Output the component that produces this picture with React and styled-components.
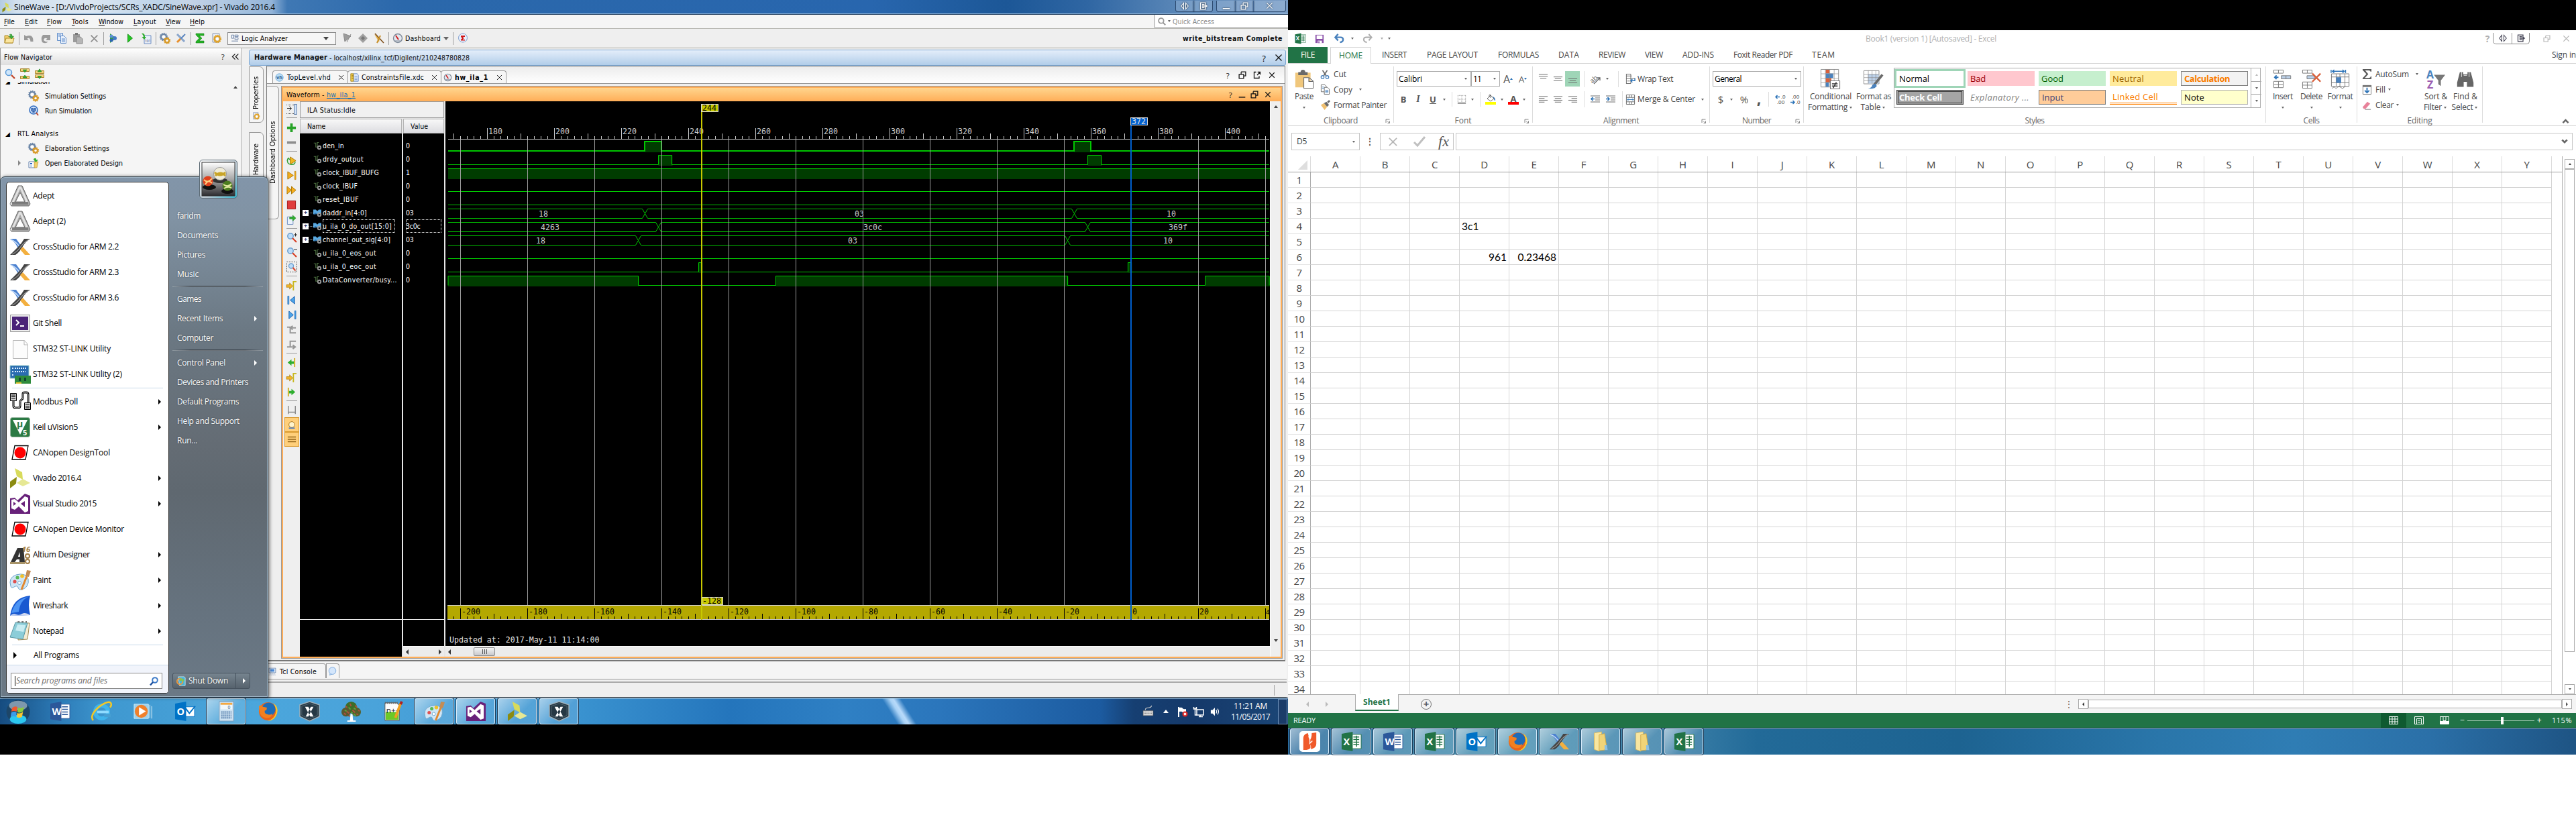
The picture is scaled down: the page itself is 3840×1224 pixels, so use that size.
import React, { useLayoutEffect, useRef, useState } from 'react';
import styled, { createGlobalStyle, css } from 'styled-components';

const UI = '"Open Sans","Noto Sans",sans-serif';
const TAHOMA = '"DejaVu Sans Condensed","Open Sans","DejaVu Sans",sans-serif';
const MONO = '"DejaVu Sans Mono","Liberation Mono",monospace';

const Global = createGlobalStyle`
  *{box-sizing:border-box}
  html,body{margin:0;padding:0;background:#fff;overflow:hidden}
  svg{display:block;flex:none;overflow:visible}
`;

/* ---------- text ---------- */
const TextSpan = styled.span`
  font-family: ${p => (p.$tahoma ? TAHOMA : UI)};
  font-size: ${p => p.$size || (p.$tahoma ? 10.5 : 12)}px;
  font-weight: ${p => (p.$bold ? 700 : 400)};
  font-style: ${p => (p.$italic ? 'italic' : 'normal')};
  color: ${p => p.$color || 'inherit'};
  line-height: 16px;
  letter-spacing: ${p => (p.$tahoma ? '-0.25px' : '-0.3px')};
  white-space: pre;
  flex: none;
  ${p => p.$link && css`text-decoration: underline;`}
`;

/* Text whose tracking is adjusted so that it fills the width given. */
function T({ w, children, size, bold, italic, color, tahoma, link }) {
  const ref = useRef(null);
  const [spacing, setSpacing] = useState(null);
  useLayoutEffect(() => {
    if (!w) return;
    const el = ref.current;
    el.style.letterSpacing = '0px';
    const n = el.textContent.length;
    setSpacing((w - el.getBoundingClientRect().width) / n);
  }, [w, children]);
  return (
    <TextSpan ref={ref} $size={size} $bold={bold} $italic={italic} $color={color} $tahoma={tahoma} $link={link}
      style={spacing === null ? undefined : { letterSpacing: `${spacing}px` }}>
      {children}
    </TextSpan>
  );
}

/* ---------- shared pieces ---------- */
const Row = styled.div`
  display: flex;
  align-items: ${p => p.$align || 'center'};
  flex: none;
  height: ${p => (p.$h ? p.$h + 'px' : 'auto')};
  width: ${p => (p.$w ? p.$w + 'px' : 'auto')};
  padding-left: ${p => p.$pl || 0}px;
  padding-top: ${p => p.$pt || 0}px;
  justify-content: ${p => p.$justify || 'flex-start'};
`;
const Col = styled.div`
  display: flex;
  flex-direction: column;
  flex: none;
  align-items: ${p => p.$align || 'stretch'};
  width: ${p => (p.$w ? p.$w + 'px' : 'auto')};
  height: ${p => (p.$h ? p.$h + 'px' : 'auto')};
  padding-left: ${p => p.$pl || 0}px;
  padding-top: ${p => p.$pt || 0}px;
`;
const Slot = styled.div`
  width: ${p => p.$w}px;
  height: ${p => (p.$h ? p.$h + 'px' : 'auto')};
  flex: none;
  display: flex;
  align-items: center;
  justify-content: ${p => (p.$left ? 'flex-start' : 'center')};
`;
const Rule = styled.div`
  width: 1px;
  height: ${p => p.$h || 19}px;
  background: ${p => p.$color || '#a0a0a0'};
`;
const Down = styled.i`
  border: ${p => p.$s || 3}px solid transparent;
  border-top: ${p => (p.$s || 3) + 1}px solid ${p => p.$color || '#666'};
  border-bottom: 0;
`;
const Right = styled.i`
  border: ${p => p.$s || 4}px solid transparent;
  border-left: ${p => p.$s || 4}px solid ${p => p.$color || '#000'};
  border-right: 0;
`;
const Left = styled.i`
  border: ${p => p.$s || 4}px solid transparent;
  border-right: ${p => p.$s || 4}px solid ${p => p.$color || '#333'};
  border-left: 0;
`;
const Up = styled.i`
  border: ${p => p.$s || 3}px solid transparent;
  border-bottom: ${p => (p.$s || 3) + 1}px solid ${p => p.$color || '#444'};
  border-top: 0;
`;

/* ---------- icons on a 16 unit grid ---------- */
const gear = (x, y, r, c) => (
  <g>
    <circle cx={x} cy={y} r={r} fill="none" stroke={c} strokeWidth="2.4" />
    <circle cx={x} cy={y} r={r + 1.4} fill="none" stroke={c} strokeWidth="1.6" strokeDasharray="1.6 1.5" />
    <circle cx={x} cy={y} r={r - 1.8} fill="#fff" />
  </g>
);
const small = {
  open: <g><path d="M1 4h5l1 2h6v9H1z" fill="#f0cf6c" stroke="#b08c28" /><path d="M3 8h12l-2 7H1z" fill="#fbe6a0" stroke="#b08c28" /><path d="M8 3q4-3 4 2h2.500L11 9 7.500 5H10q0-2-2-2z" fill="#3cb03c" stroke="#1c7c1c" strokeWidth=".5" /></g>,
  undo: <path d="M1 3v8h7L5.500 8.500q4-3 5 4.500h4Q15 1 4 5z" fill="#9a9a9a" />,
  redo: <path d="M15 3v8H8l2.500-2.500Q6 6 5 11q3 3 7 2-4 4-9 1-3-6 1-11z" fill="#9a9a9a" />,
  copy: <g fill="#e8f0fc" stroke="#5f8cc8"><path d="M1.500.5h8v11h-8z" /><path d="M6.500 4.500h5l3 3v8h-8z" /><path d="M8 9h5M8 11h5M8 13h5M3 3h4M3 5h3" /></g>,
  paste: <g fill="#9b9b9b"><path d="M1 2h10v12H1z" /><path d="M4 0h4v3H4z" fill="#777" /><path d="M6 6h6l3 3v7H6z" fill="#b6b6b6" stroke="#888" /></g>,
  cross: <path d="M2 2l12 12M14 2L2 14" stroke="#8e8e8e" strokeWidth="2" />,
  debug: <g><path d="M3 1l9 7-9 7z" fill="#2fa52f" /><circle cx="5" cy="5" r="2.500" fill="#5d8fd8" /><circle cx="10" cy="8" r="3" fill="#4479c8" /><circle cx="5" cy="11" r="2.500" fill="#2e64b4" /></g>,
  run: <path d="M4 1l8 7-8 7z" fill="#24c424" stroke="#138a13" />,
  bits: <g><path d="M5 4h10v12H5z" fill="#e9effa" stroke="#6c8cc0" /><text x="6" y="14" fontSize="5" fontFamily={UI} fill="#335">101</text><path d="M1 1q5-1 5 5h2L5 10 1.500 6H4Q4 3 1 1z" fill="#2fae2f" /></g>,
  gears: <g>{gear(6, 6, 4, '#6d87a8')}{gear(11, 11.500, 3, '#d89a28')}</g>,
  tools: <g><path d="M2 2l11 11" stroke="#8aa6cc" strokeWidth="3" /><path d="M14 2L7 9" stroke="#5d86bf" strokeWidth="2" /><path d="M7 9l-5 5" stroke="#e8902c" strokeWidth="3" /></g>,
  sigma: <path d="M2 1h12v3H7l4 4-4 4h7v3H2v-2l5-5-5-5z" fill="#23b223" stroke="#178017" strokeWidth=".6" />,
  gearPage: <g><path d="M2 1h10v13H2z" fill="#e8edf6" stroke="#8896b0" />{gear(9, 9, 4, '#e0a228')}</g>,
  panes: <g fill="#f4f7fc" stroke="#4f6a94"><path d="M1.500 1.500h4v6h-4zM7.500 1.500h6v3h-6zM7.500 6.500h6v3h-6zM1.500 12.500h12" /></g>,
  wand: <g><path d="M3 1l11 4-9 8zM8 14l6-12" fill="#9c9c9c" stroke="#8a8a8a" /></g>,
  chip: <g fill="#a0a0a0"><path d="M8 1l7 7-7 7-7-7z" /><path d="M8 5l3 3-3 3-3-3z" fill="#777" /></g>,
  noTrig: <g><path d="M1 2l7 12 1-6z" fill="#e2b24e" /><path d="M15 15L2 1" stroke="#7b4a14" strokeWidth="1.500" /><path d="M10 4L5 15" stroke="#c8902c" strokeWidth="2" /></g>,
  gauge: <g><circle cx="8" cy="8" r="6.500" fill="#e3e8ef" stroke="#7c8796" strokeWidth="1.400" /><path d="M9 10L5 4" stroke="#d02020" strokeWidth="2" /><path d="M4 12h8" stroke="#7c8796" /></g>,
  sigRed: <g><circle cx="8" cy="7.500" r="6.500" fill="#e9f0fc" stroke="#7f9fd0" /><path d="M5 4h6v2H8l1.500 1.800L8 10h3v1.500H5V10l2-2-2-2z" fill="#d01818" /></g>,
  lens: <g><circle cx="6" cy="6" r="4.500" fill="#cfe6fa" stroke="#5a9ad8" strokeWidth="1.500" /><path d="M10 10l5 5" stroke="#c04a30" strokeWidth="2.400" /></g>,
  lensGray: <g><circle cx="6.500" cy="6.500" r="5" fill="none" stroke="#999" strokeWidth="2.400" /><path d="M10 10l5 5" stroke="#999" strokeWidth="2.600" /></g>,
  lensPlus: <g><circle cx="6" cy="6" r="4.200" fill="#bcdcf8" stroke="#6a9ed0" strokeWidth="1.500" /><path d="M9 9l6 6" stroke="#d8452c" strokeWidth="2.200" /><path d="M13.500 1.500v5M11 4h5" stroke="#333" /></g>,
  lensMinus: <g><circle cx="6" cy="6" r="4.200" fill="#bcdcf8" stroke="#6a9ed0" strokeWidth="1.500" /><path d="M9 9l6 6" stroke="#d8452c" strokeWidth="2.200" /><path d="M11 4h5" stroke="#333" /></g>,
  lensFit: <g><path d="M.5.5h15v15H.5z" fill="none" stroke="#555" strokeDasharray="2 1.500" /><circle cx="7" cy="6.500" r="3.500" fill="#bcdcf8" stroke="#6a9ed0" strokeWidth="1.300" /><path d="M9.500 9l4 4.500" stroke="#d8452c" strokeWidth="2" /></g>,
  collapse: <g stroke="#a8842c" fill="#f3d27c"><path d="M1.500.5h13v4h-13zM1.500 11.500h13v4h-13z" /><path d="M5 2h6L8 6zM5 14h6l-3-4z" fill="#35b035" stroke="#1c7c1c" strokeWidth=".6" /></g>,
  expand: <g stroke="#a8842c" fill="#f3d27c"><path d="M1.500 3.500h13v4h-13zM1.500 9.500h13v4h-13z" /><path d="M5 5h6L8 .8zM5 11.500h6l-3 4z" fill="#35b035" stroke="#1c7c1c" strokeWidth=".6" /></g>,
  runSim: <g><circle cx="8" cy="7" r="6" fill="#cfe0f8" stroke="#2f6cc0" strokeWidth="1.500" /><path d="M5 9V5h2v5h2V5h2v4" fill="none" stroke="#1d50a0" strokeWidth="1.300" /><path d="M12 11l3 4" stroke="#c04a30" strokeWidth="2" /></g>,
  elab: <g><path d="M1 6h10v9H1z" fill="#fff" stroke="#5e7ca8" /><path d="M3 8h3v2H3zM3 12h3v1H3z" fill="#2868c8" /><path d="M9 6h6l-2 9H9z" fill="#f2cf6a" stroke="#b08c28" strokeWidth=".6" /><path d="M8 2q4-3 4 1h3l-3.500 4L8 3z" fill="#2fae2f" /></g>,
  vhd: <g><circle cx="8" cy="8" r="7" fill="#b8dcf5" stroke="#6aa8d8" /><text x="2.500" y="11.500" fontSize="9" fontWeight="700" fontFamily={UI} fill="#26588c">vh</text></g>,
  xdc: <g><path d="M6 1h7l2 3v11H6z" fill="#dfe9fa" stroke="#5c84c4" /><path d="M8 6h5M8 9h5M8 12h5" stroke="#5c84c4" /><path d="M1 1h5v14H1z" fill="#f0cc4c" stroke="#a08018" /><path d="M3 4h3M3 7h3M3 10h3" stroke="#806000" /></g>,
  dock: <g><path d="M0 1.500h15M0 14.500h15" stroke="#444" strokeDasharray="1 1" /><path d="M11.500.5h4v15h-4z" fill="#d4e4f8" stroke="#5e7ca8" /><path d="M1 6.500h6M4.500 3.500l3 3-3 3" fill="none" stroke="#222" /></g>,
  plus: <path d="M6 1h4v5h5v4h-5v5H6v-5H1V6h5z" fill="#27a327" />,
  minus: <path d="M1 6h14v4H1z" fill="#8d8d8d" />,
  rerun: <g><path d="M6 2l9 6-9 6z" fill="#f2b61e" stroke="#a87808" /><path d="M2 5q-2 8 5 9 6 1 7-4M1 8l2-4 3 3" fill="none" stroke="#35a035" strokeWidth="1.600" /></g>,
  step: <g><path d="M2 2l9 6-9 6z" fill="#f6ad1c" stroke="#a87808" /><path d="M13 1.500h2v13h-2z" fill="#f6ad1c" stroke="#a87808" strokeWidth=".6" /></g>,
  fast: <path d="M1 2l7 6-7 6zM8 2l7 6-7 6z" fill="#f6ad1c" stroke="#a87808" />,
  stop: <path d="M1.500 1.500h13v13h-13z" fill="#e03c3c" stroke="#a01818" />,
  exportI: <g><path d="M1.500 3.500h9v12h-9z" fill="#eaf2fc" stroke="#6c8cc0" /><path d="M5 4h5V1l5 4.500L10 10V7H5z" fill="#2fae2f" stroke="#1c7c1c" strokeWidth=".6" /></g>,
  edge: <g><path d="M0 7h5V4l5 5-5 5v-3H0z" fill="#f0b42a" stroke="#a87808" strokeWidth=".7" /><path d="M11 16V2h5" fill="none" stroke="#c8b820" strokeWidth="2" /></g>,
  prev: <g><path d="M13 2v12L6 8z" fill="#4ba3e8" stroke="#1d62b0" /><path d="M2 1.500h2v13H2z" fill="#4ba3e8" stroke="#1d62b0" strokeWidth=".7" /></g>,
  next: <g><path d="M4 2v12l7-6z" fill="#4ba3e8" stroke="#1d62b0" /><path d="M13 1.500h2v13h-2z" fill="#4ba3e8" stroke="#1d62b0" strokeWidth=".7" /></g>,
  swapL: <path d="M1 4h5v9h9M7 5h8M10 2L6 5l4 3" fill="none" stroke="#989898" strokeWidth="2.200" />,
  swapR: <path d="M1 12h5V3h9M3 12h10M10 9l4 3-4 3" fill="none" stroke="#989898" strokeWidth="2.200" />,
  mark: <g><path d="M2 8l6-5v3h4v4H8v3z" fill="#2fae2f" /><path d="M13 1v14" stroke="#d0b020" strokeWidth="2" /></g>,
  markR: <g><path d="M14 8L8 3v3H4v4h4v3z" fill="#2fae2f" /><path d="M3 1v14" stroke="#d0b020" strokeWidth="2" /></g>,
  snap: <path d="M2 1v14M14 1v14M2 12h12" stroke="#888" strokeWidth="1.600" fill="none" />,
  hand: <g><circle cx="8" cy="8" r="5" fill="#fff4cc" stroke="#a06a10" /><path d="M3 14h10" stroke="#4a78c0" strokeWidth="2" /></g>,
  lines: <path d="M1 4h14M1 8h14M1 12h14" stroke="#94661a" strokeWidth="1.500" />,
  pc: <g><path d="M1.500 1.500h13v9h-13z" fill="#e4edf8" stroke="#5e7ca8" /><path d="M4 3.500h8v5H4z" fill="#4d8bd8" /><path d="M2 13h12M1 15h14" stroke="#5e7ca8" strokeDasharray="1 1" /></g>,
  bubble: <g><circle cx="8" cy="7.500" r="6.500" fill="#d4e6fb" stroke="#6a9ed8" /><path d="M4 12l-1 3.500 4-2" fill="#d4e6fb" stroke="#6a9ed8" /></g>,
  wave: <g fill="none"><path d="M1 3h4v8h3V2h3" stroke="#4c7040" strokeWidth="1.500" /><circle cx="12" cy="12" r="3" stroke="#9a9a9a" strokeWidth="2.500" /></g>,
  bus: <g><path d="M0 2h5l3 3 3-3h5v9H0z" fill="#5aa9e0" /><path d="M0 12l4-4 4 2" fill="#2c72ac" /><circle cx="12" cy="12" r="3" fill="none" stroke="#9a9a9a" strokeWidth="2.500" /></g>,
  restore: <path d="M5.500 1.500h9v8h-4M1.500 6.500h9v8h-9zM5.500 6V2" fill="none" stroke="currentColor" strokeWidth="1.700" />,
  floatW: <path d="M6 2H2v12h10v-4M9 2h5v5M14 2L8 8" fill="none" stroke="currentColor" strokeWidth="1.700" />,
  close: <path d="M2 2l12 12M14 2L2 14" stroke="currentColor" strokeWidth="1.700" />,
  qm: <text x="4.500" y="13.500" fontSize="14" fontFamily={UI} fill="currentColor">?</text>,
  line: <path d="M1 13h14" stroke="currentColor" strokeWidth="2" />,
  chevL: <path d="M8 3L3 8l5 5M14 3L9 8l5 5" fill="none" stroke="currentColor" strokeWidth="1.500" />,
  scissors: <g><path d="M4 1l6 9M12 1L6 10" stroke="#666" strokeWidth="2" /><g fill="none" stroke="#4a82bd" strokeWidth="1.500"><circle cx="4" cy="12.500" r="2.500" /><circle cx="12" cy="12.500" r="2.500" /></g></g>,
  xcopy: <g fill="#fff" stroke="#6a6a6a"><path d="M1.500.5h6l2 2v9h-8z" /><path d="M6.500 4.500h5l3 3v8h-8z" /><path d="M8 9h5M8 11h5M8 13h5M3 4h3M3 6h3" stroke="#4a82bd" /></g>,
  painter: <g><path d="M1 8l5-3 5 6-4 5z" fill="#f0c070" /><path d="M6 5l4-2 4 5-3 3z" fill="#6a6a6a" /><path d="M12 4l3-3" stroke="#6a6a6a" strokeWidth="3" /></g>,
  floppy: <g><path d="M1 1h14v14H1z" fill="#8a4fa8" /><path d="M3 2h10v6H3z" fill="#fff" /><path d="M5 11h7v4H5z" fill="#fff" /><path d="M6 12h2v3H6z" fill="#8a4fa8" /></g>,
  xundo: <path d="M2 6h8q4 0 4 3.500T9 14M6 1L1.500 6 6 11" fill="none" stroke="#4a82bd" strokeWidth="2.600" />,
  xredo: <path d="M14 6H6Q2 6 2 9.500T7 14M10 1l4.500 5L10 11" fill="none" stroke="#b0b0b0" strokeWidth="2.200" />,
  xlT: <path d="M1 1h14M1 4h14M3 7h10" stroke="#6a6a6a" fill="none" />,
  xlM: <path d="M1 5h14M3 8h10M1 11h14" stroke="#6a6a6a" fill="none" />,
  xlB: <path d="M1 8h14M3 11h10M1 14h14" stroke="#6a6a6a" fill="none" />,
  xlL: <path d="M1 3h14M1 6h9M1 9h14M1 12h9" stroke="#6a6a6a" fill="none" />,
  xlC: <path d="M1 3h14M3 6h10M1 9h14M3 12h10" stroke="#6a6a6a" fill="none" />,
  xlR: <path d="M1 3h14M6 6h9M1 9h14M6 12h9" stroke="#6a6a6a" fill="none" />,
  indL: <g fill="none" stroke="#6a6a6a"><path d="M1 3h14M8 6h7M8 9h7M1 12h14" /><path d="M7 7.500H2M4.500 5L2 7.500 4.500 10" stroke="#2e74b8" strokeWidth="1.600" /></g>,
  indR: <g fill="none" stroke="#6a6a6a"><path d="M1 3h14M8 6h7M8 9h7M1 12h14" /><path d="M1 7.500h5M3.500 5L6 7.500 3.500 10" stroke="#2e74b8" strokeWidth="1.600" /></g>,
  orient: <g><text x="0" y="12" fontSize="10" fontFamily={UI} fill="#555" transform="rotate(-42 5 10)">ab</text><path d="M5 15L14 6M10 6h4v4" stroke="#666" fill="none" strokeWidth="1.300" /></g>,
  wrap: <g fill="none" stroke="#6a6a6a"><path d="M1.500 0v16M1 3.500h9M1 7.500h14M1.500.5h7v15h-7M3 11.500h4" /><path d="M15 7v4H9M11 8.500L8.500 11l2.500 2.500" stroke="#2e74b8" strokeWidth="1.500" /></g>,
  merge: <g fill="none" stroke="#6a6a6a"><path d="M1.500.5h13v15h-13zM1.500 4.500h13M1.500 11.500h13M6 .5v4M10 .5v4M6 11.500v4M10 11.500v4" /><path d="M3 8h10M5 6L3 8l2 2M11 6l2 2-2 2" stroke="#2e74b8" /></g>,
  borderLine: <g><path d="M1.500 1.500h13M1.500 1.500v12M14.500 1.500v12M8 1.500v12M1.500 8h13" fill="none" stroke="#888" strokeDasharray="1 1" /><path d="M1 14.500h14" stroke="#444" strokeWidth="1.600" /></g>,
  bucket: <g><path d="M3 7l5-5 5 5-5 4z" fill="#fff" stroke="#6a6a6a" /><path d="M6 5V1.500h2V6" fill="none" stroke="#6a6a6a" /><path d="M11 4q4 1 4 6-2 0-2-3z" fill="#2e74b8" /><path d="M0 12h16v4H0z" fill="#ff0" /></g>,
  fontCol: <g><text x="3.500" y="11.500" fontSize="13" fontWeight="700" fontFamily={UI} fill="#555">A</text><path d="M0 12h16v4H0z" fill="#f00" /></g>,
  launcher: <g fill="none" stroke="#777" strokeWidth="1.800"><path d="M2 12V2h11M6 7l6 6M13 7v6H7" /></g>,
  fill: <g><path d="M1.500 1.500h13v14h-13z" fill="#fff" stroke="#777" /><path d="M1 1h14v3H1z" fill="#777" /><path d="M8 5v8M4.500 9.500L8 13l3.500-3.500" stroke="#2e74b8" fill="none" strokeWidth="2" /></g>,
  eraser: <g><path d="M1 11l8-9 5 3-8 9H3z" fill="#e8829a" /><path d="M5 15h10" stroke="#666" /></g>,
  xsum: <path d="M1 0h14v4h-1.500Q13 2 11 2H5l5 6-5.500 6H11q2.500 0 3-2.500h1V16H1v-1.500L7 8 1 1.500z" fill="#5a5a5a" />,
  caretUp: <path d="M3 10l5-5 5 5" fill="none" stroke="#666" strokeWidth="3" />,
  caretDn: <path d="M2 4l6 6 6-6" fill="none" stroke="#666" strokeWidth="4" />,
  arrowsOut: <g fill="none" stroke="currentColor" strokeWidth="1.400"><path d="M6 2v12L1 8zM10 2v12l5-6z" /></g>,
  exit: <g fill="none" stroke="currentColor" strokeWidth="1.700"><path d="M12 5V1.500H2v13h10V11M5 5h5M5 8h9M5 11h5M11 5l4 3-4 3" /></g>,
  keyboard: <g><path d="M1 7h14v7H1z" fill="#ddd" stroke="#555" strokeWidth=".6" /><path d="M2 9h12M2 11h12" stroke="#555" strokeDasharray="1 1" /><path d="M4 6q0-3 4-3t5-3" stroke="#ccc" fill="none" /></g>,
  flag: <g><path d="M2 1v15" stroke="#fff" strokeWidth="2" /><path d="M3 2q4-1 5 1t5 1v6q-4 1-5-1t-5-1z" fill="#fff" /><circle cx="11.500" cy="11.500" r="4" fill="#d82424" /><path d="M10 10l3 3M13 10l-3 3" stroke="#fff" strokeWidth="1.400" /></g>,
  net: <g fill="none" stroke="#fff" strokeWidth="1.500"><path d="M5 5h10v8H5zM8 15.500h6M10 13v2" /><path d="M2.500 2v5M.5 1v3h4V1M2.500 7v6H5" /></g>,
  vol: <g><path d="M1 5h3l4-4v14l-4-4H1z" fill="#fff" /><path d="M10 5q2 3 0 6M12.500 3q3.500 5 0 10" stroke="#fff" fill="none" strokeWidth="1.300" /></g>,
};
function Icon({ n, s = 16 }) {
  return <svg width={s} height={s} viewBox="0 0 16 16">{small[n]}</svg>;
}

/* ---------- icons on a 32 unit grid ---------- */
const officeTile = (c, letter, sheet) => (
  <g>
    <path d="M15 5h16v22H15z" fill="#fff" stroke={c} />
    {sheet}
    <path d="M1 4l17-3v30L1 28z" fill={c} />
    <text x="3.500" y="21.500" fontSize="15" fontWeight="700" fontFamily={UI} fill="#fff">{letter}</text>
  </g>
);
const big = {
  penrose: (
    <g strokeLinejoin="round">
      <path d="M13 1h6l12 27-2 3H3l-2-3z" fill="#a9a9a9" stroke="#666" />
      <path d="M16 2L5 26l-3 3M16 2l10 22-2 1" fill="none" stroke="#e2e2e2" strokeWidth="3" />
      <path d="M4 27h24" stroke="#7e7e7e" strokeWidth="4" />
      <path d="M16 11l7 14H9z" fill="#fff" stroke="#666" />
    </g>
  ),
  crossX: (
    <g>
      <path d="M1 4h9l8 11-5 3Q8 8 1 4z" fill="#4d82d0" />
      <path d="M2 5q8 3 14 12" fill="none" stroke="#c4dcf8" strokeWidth="1.500" />
      <path d="M31 4h-9q-4 7-8 11L1 28h8q6-4 10-11Q24 8 31 4z" fill="#444" />
      <path d="M29 5q-8 5-13 12-5 7-12 10" fill="none" stroke="#999" strokeWidth="1.200" />
      <path d="M20 16l11 12h-8l-7-8z" fill="#f3b040" />
    </g>
  ),
  shell: <g><path d="M1.500 3.500h29v25h-29z" fill="#eee" stroke="#999" /><path d="M4 6h24v20H4z" fill="#4a2378" /><path d="M10 11l4 4-4 4M16 20h6" stroke="#fff" strokeWidth="2" fill="none" /></g>,
  page: <path d="M5.500 3.500h17l5 6v21h-22zM22 4v6h5" fill="#fcfcfc" stroke="#b5b5b5" />,
  stlink: <g><path d="M1 3h28v19H1z" fill="#2a6cb0" stroke="#9cc" /><path d="M4 7h2M8 7h18M4 12h2M8 12h16M4 17h2" stroke="#d8ecff" strokeWidth="2" strokeDasharray="2 1" /><path d="M8 18h24v12H8z" fill="#2e8b3c" /><path d="M14 21h3v5h-3zM22 21h3v5h-3z" fill="#143" /><path d="M10 29h8" stroke="#e0c030" strokeWidth="2" /></g>,
  modbus: <g fill="none" stroke="#000"><path d="M1.500 3.500h9v11h-9z" fill="#ccc" /><path d="M3 6h6M3 8.500h6M3 11h6" /><path d="M22.500 17.500h9v10h-9z" fill="#ccc" /><path d="M24 20h6M24 22.500h6M24 25h6" /><path d="M6 15v7q0 3 3 3h4q3 0 3-3v-6q0-2 2-3t2-3V4q0-2 3-2h2q3 0 3 3v12" strokeWidth="3" /><path d="M6 15v7q0 3 3 3h4q3 0 3-3v-6q0-2 2-3t2-3V4q0-2 3-2h2q3 0 3 3v12" stroke="#ccc" /></g>,
  keil: <g><rect x="1.500" y="1.500" width="29" height="29" rx="3" fill="#2b7a44" stroke="#9cb8a4" /><path d="M5 5h22l-11 22z" fill="#fff" /><text x="11" y="16" fontSize="14" fontWeight="700" fontFamily={UI} fill="#2b7a44">μ</text><text x="20" y="28" fontSize="11" fontWeight="700" fontFamily={UI} fill="#fff">5</text></g>,
  canopen: <g><path d="M8 5.500h20L24 26H4z" fill="#fff" stroke="#000" strokeWidth="1.300" /><circle cx="16" cy="16" r="8.500" fill="#f00" /></g>,
  vivado: <g><path d="M8 1l11 6 1 11-9-5z" fill="#d8db5c" /><path d="M11 14L1 21v10l9-7z" fill="#8b8b10" /><path d="M11 23l9-6 11 6-11 5z" fill="#e6e894" /></g>,
  vs: <g><path d="M1 31V8l7-1 4 4L23 1l8 3v27z" fill="#68217a" /><path d="M3 10l5-1 6 5 9-9 5 2v20l-5 2-9-9-6 5-5-2z" fill="#fff" /><path d="M6 13v6l4-3zM23 12l-6 4 6 5z" fill="#68217a" /></g>,
  altium: <g><path d="M1 27h22v3H1z" fill="#a89468" /><path d="M12 6h9l2 21h-8v-4h-4l-3 4H2zM15 12l-2 7h3z" fill="#333" fillRule="evenodd" /><text x="19" y="12" fontSize="11" fontWeight="700" fontStyle="italic" fontFamily={UI} fill="#a07c44">16</text><g fill="none" stroke="#a07c44" strokeWidth="2"><circle cx="27" cy="18" r="3" /><circle cx="27" cy="26" r="3" /></g></g>,
  paint: <g><path d="M2 25Q-2 12 10 8q14-4 18 6 2 12-9 16-5 1-6-3t-6-1q-4 3-5-1z" fill="#cfe6f6" stroke="#6fa6cc" /><circle cx="8" cy="18" r="2.600" fill="#e05050" /><circle cx="12" cy="12" r="2.600" fill="#58b858" /><circle cx="19" cy="10" r="2.800" fill="#f2c028" /><circle cx="15" cy="20" r="2.500" fill="#fff" stroke="#6fa6cc" /><path d="M18 30l8-20" stroke="#e08830" strokeWidth="3" /><path d="M24 10l2-9 6 1-3 9z" fill="#c48c54" /></g>,
  shark: <g><path d="M1 31Q5 3 31 1q-4 13 0 29z" fill="#1858d0" /><path d="M3 27Q9 6 28 3q-12 5-14 22z" fill="#4c94f4" /><path d="M1 31q4-4 9-2t9-1 12 2z" fill="#cfd8f0" /></g>,
  notepad: <g><path d="M12 3l18 1-3 24-14 1z" fill="#f4ecd4" stroke="#a08850" /><path d="M9 3l18 1-7 24L1 25z" fill="#8ccdd8" stroke="#5c98a4" /><path d="M12 6l12 1-3 10-12-2z" fill="#c8ecf2" /><path d="M11 2h16" stroke="#777" strokeWidth="2" strokeDasharray="1 1" /></g>,
  word: officeTile('#2b579a', 'W', <path d="M19 9h9M19 13h9M19 17h9M19 21h9" stroke="#2b579a" strokeWidth="1.500" />),
  excel: officeTile('#217346', 'X', <g stroke="#217346" strokeWidth="1.500"><path d="M19 9h9M19 13h9M19 17h9M19 21h9M24 7v17" /></g>),
  outlook: <g><path d="M16 9h15v15H16z" fill="#fff" stroke="#0072c6" /><path d="M17 11l6 8 9-11" fill="none" stroke="#0072c6" strokeWidth="2" /><path d="M1 4l17-3v30L1 28z" fill="#0072c6" /><text x="3.500" y="21.500" fontSize="15" fontWeight="700" fontFamily={UI} fill="#fff">O</text></g>,
  ie: <g fill="none"><circle cx="16" cy="17" r="10" stroke="#3fb4ec" strokeWidth="6" /><path d="M9 17h18" stroke="#8fdcff" strokeWidth="4" /><path d="M20 22.500h10" stroke="#479fd2" strokeWidth="5" /><path d="M3 30Q-3 22 12 9 26-1 30 3q2 3-1 7" stroke="#f4c826" strokeWidth="2.600" /></g>,
  wmp: <g><path d="M2 5h22v22H2z" fill="#9cd0ec" stroke="#c8e8f8" /><path d="M26 6v20M29 8v19" stroke="#8cc4e4" strokeWidth="2" /><circle cx="13" cy="16" r="10" fill="#f0802c" /><path d="M9.500 9.500v13L20 16z" fill="#fff" /></g>,
  shut: <g><path d="M8 2h18l4 3v25H12z" fill="#49b4d4" stroke="#bfe8f4" strokeWidth="2" /><circle cx="13" cy="17" r="9" fill="none" stroke="#f09a3c" strokeWidth="4" /><path d="M13 6l6 3v6h-6zM20 8l6 2v6h-6z" fill="#7cc850" /></g>,
  calc: <g><path d="M5 1h22v30H5z" fill="#cde2f2" stroke="#7c9cb8" /><path d="M7 3h18v3H7z" fill="#f6a840" /><path d="M7 6h18v7H7z" fill="#f2f8fc" /><path d="M8 17h16M8 20h16M8 23h16M8 26h16" stroke="#5c84b0" strokeWidth="2" strokeDasharray="2 1" /><text x="18" y="12" fontSize="7" fontFamily={UI} fill="#357">0</text></g>,
  firefox: <g><circle cx="16" cy="16" r="14" fill="#e8641c" /><circle cx="17" cy="13" r="10.500" fill="#1e6cb8" /><path d="M24 3q9 7 6 16-4 12-15 12 11-3 13-13 1-8-4-15z" fill="#fcc828" /><path d="M2 8q4-3 6 1l6 1q1 4-3 5-1 5 5 6 4 1 7-2-2 8-10 7Q4 25 3 16z" fill="#f28020" /></g>,
  shieldX: <g><path d="M16 1l15 5v18l-15 7-15-7V6z" fill="#263844" stroke="#9fb0ba" strokeWidth="1.500" /><path d="M16 4l12 4v14l-12 6-12-6V8z" fill="none" stroke="#52646f" /><path d="M9 9h5l8 15h-5zM22 9h-4l-8 15h4z" fill="#fff" /></g>,
  tree: <g><path d="M15 20h3l1 11h-5z" fill="#fff" /><circle cx="16" cy="10" r="9" fill="#3e6c28" /><circle cx="8" cy="17" r="7" fill="#5a5830" /><circle cx="24" cy="17" r="7" fill="#54602c" /><path d="M7 8l3 2M14 4l2 4M22 7l3 3M9 16l4 3M18 14l4 4M24 20l3 1M12 24l2-2M5 19l3 2M27 14l2 2" stroke="#b0503c" strokeWidth="2" /><path d="M12 10l3 3M20 11l3 2M6 14l3 2M20 20l3 3M16 17l2 2" stroke="#5fa03c" strokeWidth="2" /><path d="M10 31h13" stroke="#fff" strokeWidth="2" /></g>,
  npp: <g><path d="M4 3h18l4 4v23H4z" fill="#fcfcfc" stroke="#555" /><path d="M5 17h20v12H5z" fill="#6cc828" /><path d="M4 3h20" stroke="#666" strokeWidth="3" strokeDasharray="1.500 1.500" /><text x="6" y="19" fontSize="12" fontFamily={UI} fill="#111">n++</text><path d="M20 26L28 4" stroke="#f0a020" strokeWidth="4" /><path d="M28 5l2-4" stroke="#b02020" strokeWidth="4" /></g>,
  foxit: <g><rect x="0" y="0" width="32" height="32" rx="5" fill="#fff" /><path d="M6 29V11q0-5 4-7l3-1q2 8 4 11v12q-3 3-6 3zM26 2v17q0 5-4 7l-4 2q0-6-2-11l-1-2q4-3 4-12z" fill="#f0592a" /><path d="M14 8q3 5 2 11l4-4" fill="none" stroke="#fff" strokeWidth="1.300" /></g>,
  folder: <g><path d="M5 2l12-2v26l-4 6-8-3z" fill="#f8e6a0" stroke="#d8b85c" /><path d="M13 5l9-2 3 20-3 7-9 1z" fill="#f0d478" stroke="#cda848" /><path d="M22 22h4l1 8h-5z" fill="#8ac0e4" /></g>,
  clip: <g><path d="M1 5h26v25H1z" fill="#f0c77c" /><path d="M6 4h4q0-4 4-4t4 4h4v5H6z" fill="#6a6a6a" /><path d="M15.500 13.500h9l7 6v12h-16zM24 14v6h7" fill="#fff" stroke="#6a6a6a" strokeWidth="1.200" /></g>,
  cond: <g><path d="M.5.5h28v28H.5z" fill="#fff" stroke="#888" /><path d="M8 1h6v6H8zM8 14h9v7H8z" fill="#d8603c" /><path d="M8 7h12v7H8zM8 21h5v7H8z" fill="#4a82bd" /><path d="M.5 7.500h28M.5 14.500h28M.5 21.500h28M7.500 0v28M14.500 0v28M21.500 0v28" stroke="#888" fill="none" strokeWidth=".7" /><path d="M15.500 18.500h15v13h-15z" fill="#fff" stroke="#666" /><path d="M18 23.500h9M18 27h9M25 21l-5 9" stroke="#333" strokeWidth="1.500" /></g>,
  table: <g><path d="M.5 2.500h24v21H.5z" fill="#fff" stroke="#888" /><path d="M7 8h17v15H7z" fill="#bcd0e8" /><path d="M.5 8.500h24M.5 13.500h24M.5 18.500h24M7.500 2v21M13.500 2v21M19.500 2v21" stroke="#888" fill="none" strokeWidth=".7" /><path d="M30 9L17 25" stroke="#6a6a6a" strokeWidth="4" /><path d="M7 31q6-1 7-6l5-2 2 4q-3 5-14 4z" fill="#4a82bd" /></g>,
  insert: <g fill="#fff" stroke="#777"><path d="M1.500 1.500h15v5h-15zM9 1.500v5M1.500 19.500h15v10h-15zM9 19.500v10M1.500 24.500h15" /><path d="M13.500 10.500h15v5h-15zM21 10.500v5" fill="#bcd0e8" /><path d="M9 13H3M6 10l-3 3 3 3" fill="none" stroke="#2e74b8" strokeWidth="2" /></g>,
  del: <g fill="#fff" stroke="#777"><path d="M1.500 1.500h15v5h-15zM9 1.500v5M1.500 20.500h15v10h-15zM9 20.500v10M1.500 25.500h15" /><path d="M8.500 10.500h12v5h-12z" fill="#bcd0e8" /><path d="M17 7l13 13M30 7L17 20" stroke="#d8603c" strokeWidth="2.600" /></g>,
  fmt: <g fill="#fff" stroke="#777"><path d="M1.500 7.500h28v20h-28zM1.500 12.500h28M1.500 21.500h28M9 7.500v20M15 7.500v20M23 7.500v20M3 31q2-5 6 0 4-6 10 0l5-4" /><path d="M9 13h8v9H9z" fill="#4a82bd" stroke="none" /><path d="M1 1v5M24 1v5M3 3.500h19M6 1L3 3.500 6 6M19 1l3 2.500L19 6" fill="none" stroke="#2e74b8" strokeWidth="1.500" /></g>,
  sort: <g><text x="1" y="15" fontSize="17" fontWeight="700" fontFamily={UI} fill="#4a82bd">A</text><text x="2" y="31" fontSize="17" fontWeight="700" fontFamily={UI} fill="#9a5cb0">Z</text><path d="M13 9h18l-7 9v9l-4-3v-6z" fill="#777" /></g>,
  bino: <g fill="#666"><path d="M6 3h6v4h8V3h6l5 19v8H19v-9h-6v9H1v-8z" /><path d="M13 9h6M9 2v10M23 2v10" stroke="#fff" /></g>,
  orb: <g><circle cx="16" cy="16" r="15.500" fill="#1d4668" /><ellipse cx="16" cy="26" rx="11" ry="6" fill="#2cc8f0" /><ellipse cx="16" cy="8" rx="12" ry="6.500" fill="#9fb4c4" opacity=".75" /><path d="M8 11q4-3 7-1l-1 6q-4-2-7 0z" fill="#f0582c" /><path d="M16 10.500q4 2 8-1l-1.500 6q-4 3-7.500 1z" fill="#8ccb3c" /><path d="M7 17q4-2 7 0l-1 6q-4-2-7 0z" fill="#3c9ce8" /><path d="M15 17.500q3 2 7.500-1L21 23q-4 2-7 0z" fill="#fcc830" /></g>,
};
function BigIcon({ n, s = 32, h }) {
  return <svg width={s} height={h || s} viewBox="0 0 32 32">{big[n]}</svg>;
}

/* ================= Vivado ================= */
const Page = styled.div`display:flex;width:3840px;height:1224px;background:#fff;font-family:${UI};color:#000;`;
const Monitor = styled.div`width:1920px;flex:none;position:relative;display:flex;flex-direction:column;`;
const Bezel = styled.div`height:45px;background:#000;flex:none;`;

const Window = styled.div`height:1040px;background:#f0f0f0;display:flex;flex-direction:column;flex:none;overflow:hidden;`;
const TitleBar = styled.div`
  height:22px;flex:none;display:flex;align-items:center;justify-content:space-between;
  border-bottom:1px solid #26415f;box-shadow:inset 0 -1px #8fb4d8;
  background:linear-gradient(90deg,#b4cce2 0,#d2e0ee 25px,#dce7f2 130px,#bcd3e8 240px,#c6d4e6 280px,#a9c4e0 350px,#93b4d8 405px,#3f78b4 428px,#2b68ab 600px,#2866ae 1300px,#1c5797 1500px,#2f66a3 1620px,#5583b5 1740px,#7a9cc4 1920px);
`;
const WinButtons = styled.div`display:flex;height:17px;align-self:flex-start;border:1px solid #2c4a70;border-top:0;border-radius:0 0 4px 4px;background:rgba(190,212,236,.28);color:#fff;margin-left:5px;`;
const WinButton = styled.div`width:${p => p.$w}px;display:flex;align-items:center;justify-content:center;border-right:1px solid #3f6390;filter:drop-shadow(0 0 1px #123);&:last-child{border-right:0}`;
const MenuBar = styled.div`height:21px;flex:none;display:flex;align-items:center;background:#f5f5f5;border-bottom:1px solid #b9b9b4;padding-left:6px;`;
const QuickAccess = styled.div`margin-left:auto;width:199px;height:20px;background:#fff;border-left:1px solid #999;border-bottom:1px solid #999;display:flex;align-items:center;padding-left:4px;`;
const Toolbar = styled.div`height:29px;flex:none;display:flex;align-items:center;background:#efefef;border-bottom:1px solid #a8a8a0;padding-left:1px;`;
const Combo = styled.div`width:162px;height:19px;margin:0 4px 0 3px;border:1px solid #888;background:#f6f6f6;display:flex;align-items:center;padding-left:4px;`;
const Body = styled.div`display:flex;flex:1;min-height:0;`;
const FlowNav = styled.div`width:360px;flex:none;border-left:1px solid #999;border-right:1px solid #b0b0b0;background:#f5f5f5;margin-right:11px;`;
const NavHead = styled.div`height:25px;display:flex;align-items:center;padding-left:5px;background:linear-gradient(#fff,#dedede);`;
const NavTools = styled.div`height:25px;display:flex;align-items:center;gap:6px;padding-left:6px;`;
const NavList = styled.div`height:140px;overflow:hidden;display:flex;`;
const NavItem = styled.div`height:22px;display:flex;align-items:center;padding-left:${p => p.$indent}px;margin-top:${p => p.$mt || 0}px;`;
const NavTri = styled.span`font-size:9px;width:18px;`;
const Main = styled.div`flex:1;display:flex;flex-direction:column;padding:2px 3px 0 0;`;
const HwBar = styled.div`height:24px;flex:none;border:1px solid #7ba6d2;border-radius:3px;background:linear-gradient(#e4eefa,#b1cde9);display:flex;align-items:center;padding-left:7px;color:#111;width:1546px;`;
const Work = styled.div`display:flex;height:888px;flex:none;`;
const SideTabs = styled.div`width:26px;padding-top:1px;display:flex;flex-direction:column;gap:14px;`;
const VTab = styled.div`
  width:${p => p.$w}px;height:${p => p.$h}px;border:1px solid #999;border-left:${p => (p.$open ? '0' : '1px solid #999')};border-radius:0 6px 6px 0;background:#f5f5f5;
  display:flex;flex-direction:column;align-items:center;justify-content:flex-end;padding-bottom:${p => p.$pb || 3}px;gap:4px;
`;
const VText = styled.span`writing-mode:vertical-rl;transform:rotate(180deg);font:11px ${TAHOMA};letter-spacing:-.1px;white-space:nowrap;height:${p => p.$h}px;line-height:14px;`;
const Frame = styled.div`width:1519px;border:1px solid #777;border-bottom:2px solid #777;background:#efefef;display:flex;flex-direction:column;`;
const TabStrip = styled.div`height:26px;flex:none;display:flex;align-items:flex-end;padding-left:8px;border-bottom:1px solid #999;background:linear-gradient(#ececec,#fff);`;
const FileTab = styled.div`height:19px;width:${p => p.$w}px;border:1px solid #999;border-bottom:0;border-radius:4px 4px 0 0;background:#f6f6f6;display:flex;align-items:center;padding-left:3px;margin-right:-1px;& > :last-child{margin-left:auto}`;
const TabClose = styled.div`width:19px;display:flex;justify-content:center;color:#000;`;
const Controls = styled.div`display:flex;align-items:center;margin-left:auto;color:#111;`;
const FrameBody = styled.div`display:flex;flex:1;padding-top:3px;`;
const WaveWindow = styled.div`width:1493px;height:854px;border:1px solid #999;padding:2px;background:#ffad57;flex:none;`;
const WaveTitle = styled.div`height:20px;display:flex;align-items:center;padding-left:5px;background:linear-gradient(#ffd58e,#ffae58);`;
const WaveBody = styled.div`display:flex;height:828px;background:#efefef;`;
const ToolCol = styled.div`width:25px;display:flex;flex-direction:column;align-items:center;padding-top:1px;`;
const ToolCell = styled.div`width:22px;height:22px;display:flex;align-items:center;justify-content:center;${p => p.$on && css`background:#ffcf7a;border:1px solid #d99a30;`}`;
const ToolRule = styled.div`width:16px;height:1px;background:#999;margin:${p => p.$m || '2px 0'};`;
const Names = styled.div`width:217px;display:flex;flex-direction:column;background:#e6e6e6;`;
const Status = styled.div`width:215px;height:25px;border:1px solid #999;background:#f0f0f0;display:flex;align-items:center;padding-left:10px;margin-bottom:1px;`;
const Head = styled.div`height:22px;width:${p => p.$w}px;border:1px solid #b5b5b5;background:linear-gradient(#f8f8f8,#dcdce0);display:flex;align-items:center;padding-left:10px;`;
const BlackCol = styled.div`width:${p => p.$w}px;background:#000;display:flex;flex-direction:column;margin-right:2px;color:#fff;`;
const SignalArea = styled.div`height:725px;border-bottom:1px solid #fff;padding-top:8px;`;
const Signal = styled.div`height:20px;display:flex;align-items:center;padding-left:4px;`;
const Expander = styled.div`width:9px;height:9px;background:#fff;color:#236;font:bold 9px/8px ${UI};text-align:center;`;
const Dots = styled.div`width:7px;border-top:1px dotted #999;`;
const Picked = styled.span`height:20px;display:flex;align-items:center;width:${p => p.$w}px;${p => p.$on && css`outline:1px dotted #fff;outline-offset:-1px;`}`;
const HScroll = styled.div`height:16px;flex:none;background:#ececec;display:flex;align-items:center;padding:0 4px;justify-content:space-between;border-top:1px solid #fff;`;
const Thumb = styled.div`width:32px;height:13px;border:1px solid #8c8c8c;border-radius:2px;background:linear-gradient(#f4f4f4,#c8c8cc);display:flex;align-items:center;justify-content:center;gap:2px;margin:0 auto 0 34px;`;
const VScroll = styled.div`width:16px;background:#efefef;display:flex;flex-direction:column;justify-content:space-between;align-items:center;padding:6px 0 22px;border-left:1px solid #fff;`;
const Console = styled.div`height:27px;flex:none;display:flex;align-items:flex-end;background:#f5f5f5;border-bottom:1px solid #999;width:1547px;`;
const ConsoleTab = styled.div`height:22px;width:${p => p.$w}px;border:1px solid #999;border-bottom:0;border-radius:0 4px 0 0;display:flex;align-items:center;padding-left:${p => p.$pl}px;gap:5px;margin-bottom:1px;`;
const StatusLine = styled.div`flex:1;margin-top:3px;border-top:2px solid #aaa;border-bottom:1px solid #777;background:#efefef;display:flex;justify-content:flex-end;align-items:center;padding-right:18px;`;

const signals = [
  ['den_in', '0'], ['drdy_output', '0'], ['clock_IBUF_BUFG', '1'], ['clock_IBUF', '0'], ['reset_IBUF', '0'],
  ['daddr_in[4:0]', '03', true], ['u_ila_0_do_out[15:0]', '3c0c', true], ['channel_out_sig[4:0]', '03', true],
  ['u_ila_0_eos_out', '0'], ['u_ila_0_eoc_out', '0'], ['DataConverter/busy...', '0'],
];
const signalWidths = [32, 61, 84, 52, 54, 66, 103, 101, 80, 80, 111];

const G = '#00c800';
const FILL = '#003c00';
/* edges: x positions where the level toggles, beginning low at the left border */
function Digital({ row, edges, thick }) {
  const hi = 211.5 + row * 20, lo = 225.5 + row * 20;
  const off = thick ? -0.5 : 0;
  let d = `M668 ${lo + off}`;
  const boxes = [];
  for (let i = 0; i < edges.length; i += 2) {
    d += `H${edges[i]}V${hi + off}H${edges[i + 1]}V${lo + off}`;
    boxes.push(<rect key={i} x={edges[i]} y={hi} width={edges[i + 1] - edges[i] + 1} height="15.500" fill={FILL} />);
  }
  return <g>{boxes}<path d={d + 'H1892'} fill="none" stroke={G} strokeWidth={thick ? 2 : 1} /></g>;
}
function Bus({ row, crosses, labels }) {
  const hi = 211.5 + row * 20, lo = 225.5 + row * 20;
  const stops = [668, ...crosses, 1892];
  return (
    <g fill="none" stroke={G}>
      {stops.slice(0, -1).map((a, i) => {
        const s = i ? a + 4 : a, e = i < crosses.length ? stops[i + 1] - 4 : 1892;
        return <path key={i} d={`M${s} ${hi}H${e}M${s} ${lo}H${e}`} />;
      })}
      {crosses.map(c => <path key={c} d={`M${c - 4} ${hi}L${c + 4} ${lo}M${c - 4} ${lo}L${c + 4} ${hi}`} />)}
      {labels.map(([x, t]) => <text key={x} x={x} y={lo - 3} fill="#ccc" stroke="none">{t}</text>)}
    </g>
  );
}
function Plot() {
  const ticks = [];
  for (let x = 676.5; x < 1892; x += 10) {
    const k = Math.round((x - 726.5) / 10);
    ticks.push(<path key={x} d={`M${x} ${k % 10 === 0 ? 191 : k % 5 === 0 ? 199 : 203}V207`} stroke="#ccc" />);
  }
  const lower = [];
  for (let x = 676.5; x < 1892; x += 10) {
    const k = Math.round((x - 686.5) / 10);
    lower.push(<path key={x} d={`M${x} ${k % 10 === 0 ? 907 : k % 5 === 0 ? 915 : 919}V923`} stroke="#000" />);
  }
  const grid = [...Array(13)].map((_, i) => 686.5 + i * 100);
  return (
    <svg width="1229" height="812" viewBox="664 151 1229 812" fontFamily={MONO} fontSize="11.600">
      <rect x="664" y="151" width="1229" height="812" fill="#000" />
      <rect x="668" y="251" width="1225" height="16" fill={FILL} />
      <path d="M668 251.500H1893" stroke={G} />
      <Digital row={0} edges={[961, 986, 1601, 1626]} thick />
      <Digital row={1} edges={[981.5, 1001.5, 1621.5, 1641.5]} />
      <Digital row={3} edges={[]} />
      <Digital row={4} edges={[]} />
      <Bus row={5} crosses={[961.5, 1601.5]} labels={[[803, '18'], [1274, '03'], [1739, '10']]} />
      <Bus row={6} crosses={[981.5, 1621.5]} labels={[[806, '4263'], [1287, '3c0c'], [1742, '369f']]} />
      <Bus row={7} crosses={[951.5, 1591.5]} labels={[[799, '18'], [1264, '03'], [1734, '10']]} />
      <Digital row={8} edges={[]} />
      <Digital row={9} edges={[1041.5, 1046.5, 1681.5, 1686.5]} />
      <Digital row={10} edges={[668, 951.5, 1156.5, 1591.5, 1796.5, 1892]} />
      {grid.map(x => <path key={x} d={`M${x} 203V902`} stroke="#9c9c9c" />)}
      <path d="M668 207.500H1892" stroke="#ccc" />
      {ticks}
      {[...Array(12)].map((_, i) => <text key={i} x={728 + i * 100} y="199.500" fill="#ccc">{180 + i * 20}</text>)}
      <rect x="667" y="902" width="1225" height="22" fill="#b4a800" />
      <path d="M667 902.500H1892M667 923.500H1892" stroke="#d4d4d4" />
      {lower}
      {[...Array(12)].map((_, i) => <text key={i} x={688 + i * 100} y="916">{-200 + i * 20}</text>)}
      <text x="1887" y="916" fontSize="9">4</text>
      <path d="M1046 156V924" stroke="#c8c800" strokeWidth="2" />
      <rect x="1045.500" y="155.500" width="25" height="11" fill="#c8c800" stroke="#d8d8d8" />
      <text x="1047" y="165">244</text>
      <rect x="1046.500" y="890.500" width="31" height="11" fill="#c8c800" stroke="#d8d8d8" />
      <text x="1047" y="900">-128</text>
      <path d="M1686 176V924" stroke="#0060d0" strokeWidth="2" />
      <rect x="1685.500" y="175.500" width="25" height="11" fill="#0060d0" stroke="#d8d8d8" />
      <text x="1687" y="185" fill="#e0e0e0">372</text>
      <text x="670" y="958" fill="#e0e0e0">Updated at: 2017-May-11 11:14:00</text>
    </svg>
  );
}

function WaveWindowView() {
  return (
    <WaveWindow>
      <WaveTitle>
        <T tahoma w={60}>{'Waveform - '}</T><T tahoma link color="#1673b8" w={43}>hw_ila_1</T>
        <Controls>
          <Slot $w={17}><Icon n="qm" s={13} /></Slot><Slot $w={17}><Icon n="line" s={11} /></Slot><Slot $w={20}><Icon n="restore" s={12} /></Slot><Slot $w={20}><Icon n="close" s={10} /></Slot><Slot $w={9} />
        </Controls>
      </WaveTitle>
      <WaveBody>
        <ToolCol>
          <ToolCell><Icon n="dock" /></ToolCell><ToolRule $m="1px 0 3px" />
          <ToolCell><Icon n="plus" s={15} /></ToolCell><ToolCell><Icon n="minus" s={15} /></ToolCell><ToolRule />
          {['rerun', 'step', 'fast', 'stop', 'exportI'].map(n => <ToolCell key={n}><Icon n={n} s={15} /></ToolCell>)}
          <ToolRule />
          {['lensPlus', 'lensMinus', 'lensFit'].map(n => <ToolCell key={n}><Icon n={n} /></ToolCell>)}
          <ToolRule />
          {['edge', 'prev', 'next', 'swapL', 'swapR'].map(n => <ToolCell key={n}><Icon n={n} s={15} /></ToolCell>)}
          <ToolRule />
          {['mark', 'edge', 'markR'].map((n, i) => <ToolCell key={i}><Icon n={n} s={15} /></ToolCell>)}
          <ToolRule />
          <ToolCell><Icon n="snap" s={14} /></ToolCell><ToolCell $on><Icon n="hand" s={14} /></ToolCell><ToolCell $on><Icon n="lines" s={14} /></ToolCell>
        </ToolCol>
        <Names>
          <Status><T tahoma w={72}>ILA Status:Idle</T></Status>
          <Row $h={22}><Head $w={152}><T tahoma w={27}>Name</T></Head><Slot $w={2} /><Head $w={61}><T tahoma w={26}>Value</T></Head></Row>
          <Row $h={780} $align="stretch">
            <BlackCol $w={152}>
              <SignalArea>
                {signals.map(([n, , bus], i) => (
                  <Signal key={n}>
                    <Slot $w={16} $left>{bus && <><Expander>+</Expander><Dots /></>}</Slot>
                    <Slot $w={14} $left><Icon n={bus ? 'bus' : 'wave'} s={12} /></Slot>
                    <Picked $w={108} $on={i === 6}><T tahoma w={signalWidths[i]}>{n}</T></Picked>
                  </Signal>
                ))}
              </SignalArea>
            </BlackCol>
            <BlackCol $w={61}>
              <SignalArea>
                {signals.map(([n, v], i) => <Signal key={n}><Picked $w={53} $on={i === 6}><T tahoma>{v}</T></Picked></Signal>)}
              </SignalArea>
              <Slot $w={61} $h={39} />
              <HScroll><Left /><Right $color="#333" /></HScroll>
            </BlackCol>
          </Row>
        </Names>
        <Col $w={1229}>
          <Plot />
          <HScroll><Left /><Thumb><Rule $h={7} $color="#555" /><Rule $h={7} $color="#555" /><Rule $h={7} $color="#555" /></Thumb></HScroll>
        </Col>
        <VScroll><Up /><Down $color="#444" /></VScroll>
      </WaveBody>
    </WaveWindow>
  );
}

const toolbarItems = [
  ['open', 25], ['|', 4], ['undo', 26], ['redo', 24], ['copy', 24], ['paste', 24], ['cross', 24, 13], ['|', 4],
  ['debug', 26], ['run', 24, 14], ['bits', 24], ['|', 4], ['gears', 24], ['tools', 24], ['|', 4], ['sigma', 24], ['gearPage', 26],
];
const menuNames = [['File', 31, 16], ['Edit', 33, 19], ['Flow', 37, 22], ['Tools', 40, 25], ['Window', 52, 37], ['Layout', 48, 34], ['View', 36, 22], ['Help', 40, 22]];

function Vivado() {
  return (
    <Window>
      <TitleBar>
        <Row><Slot $w={21}><BigIcon n="vivado" s={16} /></Slot><T w={389}>SineWave - [D:/VivdoProjects/SCRs_XADC/SineWave.xpr] - Vivado 2016.4</T></Row>
        <Row $align="flex-start" $h={20}>
          <WinButtons><WinButton $w={27}><Icon n="arrowsOut" s={12} /></WinButton><WinButton $w={27}><Icon n="exit" s={12} /></WinButton></WinButtons>
          <WinButtons><WinButton $w={28}><Icon n="line" s={12} /></WinButton><WinButton $w={27}><Icon n="restore" s={12} /></WinButton><WinButton $w={47}><Icon n="close" s={11} /></WinButton></WinButtons>
          <Slot $w={3} />
        </Row>
      </TitleBar>
      <MenuBar>
        {menuNames.map(([n, s, w]) => <Slot key={n} $w={s} $left><T tahoma w={w}><u>{n[0]}</u>{n.slice(1)}</T></Slot>)}
        <QuickAccess><Icon n="lensGray" s={12} /><Slot $w={10}><Down $s={2} /></Slot><T tahoma color="#8c8c8c" w={62}>Quick Access</T></QuickAccess>
      </MenuBar>
      <Toolbar>
        {toolbarItems.map(([n, w, s], i) => <Slot key={i} $w={w}>{n === '|' ? <Rule /> : <Icon n={n} s={s || 16} />}</Slot>)}
        <Combo><Icon n="panes" s={13} /><Slot $w={3} /><T tahoma w={69}>Logic Analyzer</T><Slot $w={53} /><Down $s={4} $color="#444" /></Combo>
        <Slot $w={24}><Icon n="wand" /></Slot><Slot $w={24}><Icon n="chip" /></Slot><Slot $w={24}><Icon n="noTrig" /></Slot><Slot $w={4}><Rule /></Slot>
        <Slot $w={23}><Icon n="gauge" /></Slot><T tahoma w={53}>Dashboard</T><Slot $w={16}><Down $s={4} /></Slot><Slot $w={4}><Rule /></Slot><Slot $w={26}><Icon n="sigRed" /></Slot>
        <Controls><T tahoma bold w={149}>write_bitstream Complete</T><Slot $w={8} /></Controls>
      </Toolbar>
      <Body>
        <FlowNav>
          <NavHead><T tahoma w={72}>Flow Navigator</T><Controls><Slot $w={18}><Icon n="qm" s={13} /></Slot><Slot $w={18}><Icon n="chevL" s={13} /></Slot></Controls></NavHead>
          <NavTools><Icon n="lens" /><Icon n="collapse" /><Icon n="expand" /></NavTools>
          <NavList>
            <Col $w={344}>
              <NavItem $indent={7} $mt={-12}><NavTri>◢</NavTri><T tahoma w={48}>Simulation</T></NavItem>
              <NavItem $indent={41}><Slot $w={25} $left><Icon n="gears" /></Slot><T tahoma w={91}>Simulation Settings</T></NavItem>
              <NavItem $indent={41}><Slot $w={25} $left><Icon n="runSim" /></Slot><T tahoma w={70}>Run Simulation</T></NavItem>
              <NavItem $indent={7} $mt={12}><NavTri>◢</NavTri><T tahoma w={61}>RTL Analysis</T></NavItem>
              <NavItem $indent={41}><Slot $w={25} $left><Icon n="gears" /></Slot><T tahoma w={96}>Elaboration Settings</T></NavItem>
              <NavItem $indent={26}><Slot $w={15} $left><Right $color="#888" /></Slot><Slot $w={25} $left><Icon n="elab" /></Slot><T tahoma w={116}>Open Elaborated Design</T></NavItem>
            </Col>
            <Row $align="flex-start" $pt={6}><Slot $w={12}><Up /></Slot></Row>
          </NavList>
        </FlowNav>
        <Main>
          <HwBar>
            <T tahoma bold size={11} w={109}>Hardware Manager</T><T tahoma w={212}> - localhost/xilinx_tcf/Digilent/210248780828</T>
            <Controls><Slot $w={22}><Icon n="qm" s={15} /></Slot><Slot $w={21}><Icon n="close" s={12} /></Slot></Controls>
          </HwBar>
          <Work>
            <SideTabs>
              <VTab $w={22} $h={84}><VText $h={51}>Properties</VText><Icon n="gearPage" s={12} /></VTab>
              <VTab $w={22} $h={84}><VText $h={49}>Hardware</VText><Icon n="chip" s={12} /></VTab>
            </SideTabs>
            <Frame>
              <TabStrip>
                <FileTab $w={113}><Slot $w={18} $left><Icon n="vhd" s={13} /></Slot><T tahoma w={65}>TopLevel.vhd</T><TabClose><Icon n="close" s={9} /></TabClose></FileTab>
                <FileTab $w={140}><Slot $w={17} $left><Icon n="xdc" s={13} /></Slot><T tahoma w={93}>ConstraintsFile.xdc</T><TabClose><Icon n="close" s={9} /></TabClose></FileTab>
                <FileTab $w={98}><Slot $w={17} $left><Icon n="gauge" s={13} /></Slot><T tahoma bold w={50}>hw_ila_1</T><TabClose><Icon n="close" s={9} /></TabClose></FileTab>
                <Controls><Slot $w={22} $h={24}><Icon n="qm" s={13} /></Slot><Slot $w={22}><Icon n="restore" s={12} /></Slot><Slot $w={22}><Icon n="floatW" s={12} /></Slot><Slot $w={22}><Icon n="close" s={10} /></Slot><Slot $w={8} /></Controls>
              </TabStrip>
              <FrameBody>
                <Col $w={21}><VTab $w={18} $h={199} $open $pb={52}><VText $h={93}>Dashboard Options</VText></VTab></Col>
                <WaveWindowView />
              </FrameBody>
            </Frame>
          </Work>
          <Console>
            <ConsoleTab $w={115} $pl={28}><Icon n="pc" s={12} /><T tahoma w={55}>Tcl Console</T></ConsoleTab>
            <ConsoleTab $w={20} $pl={2}><Icon n="bubble" s={13} /></ConsoleTab>
          </Console>
          <StatusLine><Rule $h={16} /></StatusLine>
        </Main>
      </Body>
    </Window>
  );
}

/* ================= Start menu ================= */
const Start = styled.div`
  position:absolute;left:0;top:263px;width:400px;height:777px;border:1px solid #34434f;box-shadow:inset 0 0 0 1px #9fb4c4,2px 0 5px rgba(0,0,0,.5);border-radius:7px 7px 0 0;
  background:linear-gradient(#8295a9 0,#8193a4 60px,#6b7883 230px,#646c74 400px,#5f6870 470px,#66737f 650px,#6b7986 100%);display:flex;padding:7px 0 6px 8px;
`;
const Programs = styled.div`width:243px;height:763px;background:#fff;border:1px solid #333;border-radius:5px;overflow:hidden;padding-top:1px;display:flex;flex-direction:column;`;
const Program = styled.div`height:38px;flex:none;display:flex;align-items:center;padding:0 11px 0 4px;& > :nth-child(2){margin-left:3px}& > i{margin-left:auto}`;
const ProgRule = styled.div`height:1px;flex:none;margin:${p => p.$m};background:#c6d8e8;`;
const SearchPane = styled.div`flex:1;background:#f1f4fb;border-top:1px solid #c6d8e8;padding:11px 0 0 6px;`;
const SearchBox = styled.div`width:226px;height:24px;border:1px solid #888;background:#fff;display:flex;align-items:center;padding:0 5px;justify-content:space-between;`;
const Places = styled.div`width:140px;padding:36px 0 0 5px;display:flex;flex-direction:column;color:#fff;text-shadow:0 0 2px rgba(0,0,0,.5);`;
const Place = styled.div`height:29px;display:flex;align-items:center;padding:0 9px 0 7px;justify-content:space-between;`;
const PlaceRule = styled.div`height:2px;margin:3px 0;background:linear-gradient(90deg,transparent,#39424b 20%,#39424b 80%,transparent);border-bottom:1px solid rgba(255,255,255,.25);`;
const ShutDown = styled.div`display:flex;margin-top:auto;margin-bottom:6px;height:24px;width:116px;border:1px solid #46525e;border-radius:3px;background:linear-gradient(#76848f,#56626d);align-items:center;padding-left:4px;gap:4px;& > :nth-child(3){margin-left:auto}`;
const Avatar = styled.div`position:absolute;left:297px;top:238px;width:57px;height:58px;border:1px solid #5c6a74;border-radius:5px;background:linear-gradient(135deg,#fff,#b8c6d0 60%,#39b8d0);padding:3px;`;

const programs = [
  ['penrose', 'Adept', 32], ['penrose', 'Adept (2)', 49], ['crossX', 'CrossStudio for ARM 2.2', 128], ['crossX', 'CrossStudio for ARM 2.3', 128], ['crossX', 'CrossStudio for ARM 3.6', 128],
  ['shell', 'Git Shell', 43], ['page', 'STM32 ST-LINK Utility', 116], ['stlink', 'STM32 ST-LINK Utility (2)', 133], null,
  ['modbus', 'Modbus Poll', 67, 1], ['keil', 'Keil uVision5', 67, 1], ['canopen', 'CANopen DesignTool', 115], ['vivado', 'Vivado 2016.4', 72, 1], ['vs', 'Visual Studio 2015', 95, 1],
  ['canopen', 'CANopen Device Monitor', 136], ['altium', 'Altium Designer', 85, 1], ['paint', 'Paint', 27, 1], ['shark', 'Wireshark', 52, 1], ['notepad', 'Notepad', 46, 1],
];
const places = [['faridm', 35], ['Documents', 61], ['Pictures', 42], ['Music', 32], null, ['Games', 36], ['Recent Items', 68, 1], ['Computer', 54], null,
  ['Control Panel', 72, 1], ['Devices and Printers', 106], ['Default Programs', 92], ['Help and Support', 93], ['Run...', 30]];

function StartMenu() {
  return (
    <>
      <Start>
        <Programs>
          {programs.map((p, i) => p
            ? <Program key={i}><BigIcon n={p[0]} /><T w={p[2]}>{p[1]}</T>{p[3] && <Right />}</Program>
            : <ProgRule key={i} $m="1px 8px" />)}
          <ProgRule $m="1px 8px 0" />
          <Row $h={29} $pl={10}><Right $s={5} /><Slot $w={25} /><T w={68}>All Programs</T></Row>
          <SearchPane><SearchBox><Row><Rule $h={15} $color="#000" /><Slot $w={1} /><T italic color="#6d6d6d" w={136}>Search programs and files</T></Row>
            <svg width="13" height="13" viewBox="0 0 13 13"><circle cx="8" cy="5" r="3.800" fill="none" stroke="#3f7cc8" strokeWidth="2" /><path d="M5 8l-4 4.500" stroke="#1d4f9c" strokeWidth="2.500" /></svg>
          </SearchBox></SearchPane>
        </Programs>
        <Places>
          {places.map((p, i) => p ? <Place key={i}><T w={p[1]}>{p[0]}</T>{p[2] && <Right $color="#fff" />}</Place> : <PlaceRule key={i} />)}
          <ShutDown><BigIcon n="shut" s={15} /><T w={59}>Shut Down</T><Rule $h={22} $color="#46525e" /><Slot $w={16}><Right $color="#fff" /></Slot></ShutDown>
        </Places>
      </Start>
      <Avatar>
        <svg width="49" height="50" viewBox="0 0 49 50">
          <defs><linearGradient id="bg" x1="0" y1="0" x2="0" y2="1"><stop offset="0" stopColor="#fff" /><stop offset=".5" stopColor="#a8a8a8" /><stop offset="1" stopColor="#2c2c30" /></linearGradient></defs>
          <rect width="49" height="50" fill="url(#bg)" stroke="#333" />
          <ellipse cx="27" cy="27" rx="11" ry="4" fill="#333" /><ellipse cx="11" cy="37" rx="10" ry="4" fill="#111" /><ellipse cx="38" cy="43" rx="9" ry="4" fill="#111" />
          <circle cx="27" cy="17" r="9.500" fill="#f0ecd8" stroke="#999" /><path d="M19 15q8 8 16 0M20 20q8-8 15 0" stroke="#c8a428" strokeWidth="3" fill="none" />
          <circle cx="9" cy="28" r="7.500" fill="#e0401c" /><path d="M3 26q6 6 12-2M5 33q4-8 10-2" stroke="#ffd080" strokeWidth="2" fill="none" />
          <circle cx="38" cy="35" r="7.500" fill="#4c7c20" /><path d="M32 33q7 5 12-1M33 39q5-4 11-1" stroke="#e0e8a0" strokeWidth="2" fill="none" />
        </svg>
      </Avatar>
    </>
  );
}

/* ================= Taskbars ================= */
const Bar = styled.div`
  height:40px;flex:none;display:flex;align-items:center;border-top:1px solid #16324c;box-shadow:inset 0 1px rgba(190,225,250,.6);
  background:${p => (p.$right
    ? 'linear-gradient(90deg,#2a6a9c 0,#4489ad 160px,#5095b4 330px,#3f83ab 560px,#226a98 700px,#1d6391 1000px,#2a76aa 1300px,#2f7db4 1500px,#2b70a8 1700px,#1e5484 1920px)'
    : 'linear-gradient(58deg,transparent 38%,#a9d2f6 47%,#b8dafa 51%,transparent 60%) 1290px 0/104px 40px no-repeat,linear-gradient(90deg,#164c80 0,#2d7cb8 90px,#3f98d0 160px,#4ba6dc 380px,#4aa3da 560px,#3a93d0 860px,#2475bc 1090px,#2f80c4 1260px,#2b76bc 1400px,#1c5ba0 1640px,#163f72 1690px,#15396a 1780px,#1b4676 1920px)')};
`;
const Tasks = styled.div`display:flex;margin-left:${p => p.$ml}px;`;
const Task = styled.div`
  width:58px;height:39px;margin-right:4px;flex:none;display:flex;align-items:center;justify-content:center;
  ${p => p.$on && css`border:1px solid #d4e9f8;border-radius:3px;box-shadow:0 0 0 1px #1c3c58;background:linear-gradient(135deg,rgba(255,255,255,.55),rgba(255,255,255,.12) 60%);`}
`;
const Clock = styled.div`width:82px;display:flex;flex-direction:column;align-items:center;color:#fff;`;
const ShowDesk = styled.div`width:14px;height:38px;border:1px solid #6f93bc;background:#1b3c68;margin:0 1px 0 0;`;
const leftTasks = ['orb', 'word', 'ie', 'wmp', 'outlook', 'calc*', 'firefox', 'shieldX', 'tree', 'npp', 'paint*', 'vs*', 'vivado*', 'shieldX*'];
const rightTasks = ['foxit', 'excel', 'word', 'excel', 'outlook', 'firefox', 'crossX', 'folder', 'folder', 'excel'];

function LeftTaskbar() {
  return (
    <Bar>
      <Tasks $ml={-2}>
        {leftTasks.map((n, i) => <Task key={i} $on={n.endsWith('*')}><BigIcon n={n.replace('*', '')} s={i ? 31 : 36} /></Task>)}
      </Tasks>
      <Controls>
        <Slot $w={28}><Icon n="keyboard" s={17} /></Slot><Slot $w={26}><Up $s={4} $color="#fff" /></Slot><Slot $w={24}><Icon n="flag" /></Slot><Slot $w={24}><Icon n="net" /></Slot><Slot $w={24}><Icon n="vol" s={14} /></Slot>
        <Clock><T w={50}>11:21 AM</T><T w={58}>11/05/2017</T></Clock>
        <ShowDesk />
      </Controls>
    </Bar>
  );
}

/* ================= Excel ================= */
const Excel = styled.div`height:1040px;flex:none;background:#fff;display:flex;flex-direction:column;color:#444;`;
const XTitle = styled.div`height:25px;flex:none;display:flex;align-items:center;`;
const FloatBox = styled.div`width:55px;height:17px;border:1px solid #888;border-top:0;border-radius:0 0 5px 5px;display:flex;align-self:flex-start;color:#445;& > div{border-right:1px solid #999}& > div:last-child{border:0}`;
const XTabs = styled.div`height:25px;flex:none;display:flex;align-items:stretch;border-bottom:1px solid #d4d4d4;`;
const FileBtn = styled.div`width:59px;background:#217346;color:#fff;display:flex;align-items:center;justify-content:center;margin-right:4px;`;
const HomeTab = styled.div`width:61px;border:1px solid #d4d4d4;border-bottom:0;margin-bottom:-1px;background:#fff;color:#217346;display:flex;align-items:center;justify-content:center;margin-right:16px;`;
const Ribbon = styled.div`height:93px;flex:none;display:flex;border-bottom:1px solid #d4d4d4;padding-top:4px;`;
const Group = styled.div`width:${p => p.$w}px;height:84px;border-right:1px solid #dcdcdc;display:flex;flex-direction:column;`;
const GroupBody = styled.div`height:73px;display:flex;flex:none;align-items:flex-start;`;
const GroupFoot = styled.div`height:16px;display:flex;align-items:center;justify-content:center;color:#666;position:relative;`;
const Launch = styled.div`position:absolute;right:4px;top:5px;`;
const Field = styled.div`width:${p => p.$w}px;height:23px;border:1px solid #ababab;display:flex;align-items:center;justify-content:space-between;padding:0 5px 0 2px;color:#000;`;
const Hi = styled.div`width:22px;height:23px;background:#9fd5b7;display:flex;align-items:center;justify-content:center;`;
const Glyph = styled.span`font:${p => p.$f || '15px'} ${UI};color:#555;line-height:20px;${p => p.$i && 'font-family:"Liberation Serif",serif;font-style:italic;'}`;
const Gallery = styled.div`width:547px;height:60px;margin-top:2px;border:1px solid #ababab;display:grid;grid-template-columns:repeat(5,100px) 15px;grid-template-rows:22px 22px;column-gap:6px;row-gap:6px;padding:4px 0 0 3px;`;
const Style = styled.div`
  height:22px;display:flex;align-items:center;padding-left:4px;background:${p => p.$bg || '#fff'};color:${p => p.$c};
  ${p => p.$sel && css`outline:3px solid #9fd5b7;`}
  ${p => p.$bd && css`border:1px solid ${p.$bd};`}
  ${p => p.$dbl && css`border:3px double #3f3f3f;padding-left:1px;`}
  ${p => p.$ul && css`border-bottom:3px double #ff8001;`}
`;
const GalleryScroll = styled.div`grid-column:6;grid-row:1/3;height:58px;margin:-4px 0 0 -2px;width:16px;border-left:1px solid #ababab;display:flex;flex-direction:column;& > div{flex:1;display:flex;align-items:center;justify-content:center;border-bottom:1px solid #ababab}& > div:last-child{border:0}`;
const FormulaRow = styled.div`height:45px;flex:none;display:flex;padding:10px 0 0 5px;`;
const FBox = styled.div`width:${p => p.$w}px;height:26px;border:1px solid #c6c6c6;display:flex;align-items:center;justify-content:${p => p.$j || 'space-between'};padding:0 6px 0 7px;margin-right:${p => p.$mr || 0}px;`;
const Sheet = styled.div`height:802px;flex:none;display:flex;overflow:hidden;`;
const Cells = styled.div`width:1900px;flex:none;overflow:hidden;border-right:1px solid #ababab;`;
const HeadRow = styled.div`height:24px;display:flex;border-bottom:1px solid #9b9b9b;`;
const Corner = styled.div`width:34px;flex:none;display:flex;justify-content:flex-end;align-items:flex-end;padding:0 4px 3px 0;border-right:1px solid #dcdcdc;`;
const CornerMark = styled.i`border:7.5px solid transparent;border-right-color:#dedede;border-bottom-color:#dedede;`;
const ColHead = styled.div`width:74px;flex:none;border-right:1px solid #dcdcdc;display:flex;align-items:center;justify-content:center;`;
const GridRow = styled.div`height:23px;display:flex;`;
const RowHead = styled.div`width:34px;flex:none;border-right:1px solid #ababab;border-bottom:1px solid #e3e3e3;display:flex;align-items:center;justify-content:center;`;
const Cell = styled.div`width:74px;flex:none;border-right:1px solid #d4d4d4;border-bottom:1px solid #d4d4d4;font:15.500px/22px Lato,"Open Sans",sans-serif;color:#000;padding:0 3px;text-align:${p => (p.$num ? 'right' : 'left')};`;
const XScroll = styled.div`width:15px;margin:4px 0 0 3px;display:flex;flex-direction:column;`;
const SBtn = styled.div`width:15px;height:15px;flex:none;border:1px solid #ababab;display:flex;align-items:center;justify-content:center;background:#fff;`;
const SThumb = styled.div`width:15px;height:720px;border:1px solid #ababab;background:#fff;margin-bottom:auto;`;
const SheetBar = styled.div`height:28px;flex:none;background:#f4f4f4;border-top:1px solid #ababab;display:flex;align-items:center;`;
const SheetTab = styled.div`width:65px;height:25px;align-self:flex-start;margin-top:-1px;background:#fff;border:1px solid #ababab;border-top:0;border-bottom:2px solid #217346;color:#217346;display:flex;align-items:center;justify-content:center;`;
const Plus = styled.div`width:16px;height:16px;border:1px solid #777;border-radius:50%;color:#555;font:700 15px/12px ${UI};text-align:center;margin-left:33px;`;
const HTrack = styled.div`margin-left:auto;display:flex;align-items:center;`;
const HThumb = styled.div`width:706px;height:13px;border:1px solid #ababab;background:#fff;`;
const Green = styled.div`height:22px;flex:none;background:#217346;color:#fff;display:flex;align-items:center;padding-left:8px;`;
const View = styled.div`width:38px;height:22px;display:flex;align-items:center;justify-content:center;${p => p.$on && 'background:#0f5a30;'}`;
const Zoom = styled.div`width:100px;height:11px;display:flex;align-items:center;justify-content:center;background:linear-gradient(transparent 5px,#a5c9b4 5px,#a5c9b4 6px,transparent 6px);& > i{width:4px;height:11px;background:#fff;margin-left:4px}`;

const tabs = [['INSERT', 67, 37], ['PAGE LAYOUT', 106, 76], ['FORMULAS', 90, 61], ['DATA', 60, 31], ['REVIEW', 69, 40], ['VIEW', 56, 27], ['ADD-INS', 76, 47], ['Foxit Reader PDF', 117, 88], ['TEAM', 60, 35]];
const letters = 'ABCDEFGHIJKLMNOPQRSTUVWXY'.split('');
const values = { D4: '3c1', D6: '961', E6: '0.23468' };

function BigButton({ w, icon, a, b, wa, wb, arrow, s = 30 }) {
  return (
    <Col $w={w} $align="center" $pt={4}>
      <BigIcon n={icon} s={s} h={30} />
      <Slot $w={w} $h={22}><T w={wa}>{a}</T></Slot>
      <Row $h={10}>{b && <T w={wb}>{b}</T>}<Slot $w={b ? 9 : 8}>{arrow && <Down $s={2.5} />}</Slot></Row>
    </Col>
  );
}
function Foot({ children, w, launch }) {
  return <GroupFoot><T w={w}>{children}</T>{launch && <Launch><Icon n="launcher" s={8} /></Launch>}</GroupFoot>;
}

function ExcelWindow() {
  const A = <Down $s={2.5} />;
  return (
    <Excel>
      <XTitle>
        <Slot $w={36}><BigIcon n="excel" s={17} /></Slot><Slot $w={22}><Icon n="floppy" s={14} /></Slot><Slot $w={36}><Icon n="xundo" s={15} /></Slot><Slot $w={4} $left>{A}</Slot>
        <Slot $w={40}><Icon n="xredo" s={15} /></Slot><Slot $w={6} $left><Down $s={2.5} $color="#aaa" /></Slot><Slot $w={14}>{A}</Slot>
        <Slot $w={703} /><T w={195} color="#b0b0b0">Book1 (version 1) [Autosaved] - Excel</T>
        <Controls>
          <Slot $w={16}><T bold size={14} color="#b0b0b0">?</T></Slot><FloatBox><Slot $w={28}><Icon n="arrowsOut" s={12} /></Slot><Slot $w={26}><Icon n="exit" s={12} /></Slot></FloatBox>
          <Slot $w={50}><T color="#b5b5b5"><Icon n="restore" s={11} /></T></Slot><Slot $w={9}><T color="#b0b0b0"><Icon n="close" s={11} /></T></Slot><Slot $w={10} />
        </Controls>
      </XTitle>
      <XTabs>
        <FileBtn><T w={21}>FILE</T></FileBtn><HomeTab><T w={35}>HOME</T></HomeTab>
        {tabs.map(([n, s, w]) => <Slot key={n} $w={s} $left><T w={w}>{n}</T></Slot>)}
        <Controls><T w={36} color="#444">Sign in</T></Controls>
      </XTabs>
      <Ribbon>
        <Group $w={158}>
          <GroupBody>
            <BigButton w={48} icon="clip" a="Paste" wa={28} arrow s={28} />
            <Col>
              <Row $h={23}><Slot $w={20} $left><Icon n="scissors" s={14} /></Slot><T w={19}>Cut</T></Row>
              <Row $h={23}><Slot $w={20} $left><Icon n="xcopy" s={15} /></Slot><T w={28}>Copy</T><Slot $w={24}>{A}</Slot></Row>
              <Row $h={23}><Slot $w={20} $left><Icon n="painter" s={15} /></Slot><T w={79}>Format Painter</T></Row>
            </Col>
          </GroupBody>
          <Foot w={51} launch>Clipboard</Foot>
        </Group>
        <Group $w={207}>
          <Col $h={73} $pl={4}>
            <Row $h={37}><Field $w={111}><T w={35}>Calibri</T>{A}</Field><Field $w={43}><T w={12}>11</T>{A}</Field>
              <Slot $w={24}><Glyph $f="16px">A</Glyph><Up $s={2} $color="#2e74b8" /></Slot><Slot $w={20}><Glyph $f="13px">A</Glyph><Down $s={2} $color="#2e74b8" /></Slot></Row>
            <Row $h={24}><Slot $w={20}><Glyph $f="700 13px">B</Glyph></Slot><Slot $w={24}><Glyph $f="700 14px" $i>I</Glyph></Slot><Slot $w={20}><Glyph $f="700 13px"><u>U</u></Glyph></Slot><Slot $w={14}>{A}</Slot>
              <Slot $w={8}><Rule $h={22} $color="#ddd" /></Slot><Slot $w={22}><Icon n="borderLine" s={14} /></Slot><Slot $w={10}>{A}</Slot><Slot $w={12}><Rule $h={22} $color="#ddd" /></Slot>
              <Slot $w={20}><Icon n="bucket" /></Slot><Slot $w={14}>{A}</Slot><Slot $w={20}><Icon n="fontCol" /></Slot><Slot $w={12}>{A}</Slot></Row>
          </Col>
          <Foot w={25} launch>Font</Foot>
        </Group>
        <Group $w={264}>
          <Col $h={73} $pl={4}>
            <Row $h={37}><Slot $w={22}><Icon n="xlT" s={15} /></Slot><Slot $w={22}><Icon n="xlM" s={15} /></Slot><Hi><Icon n="xlB" s={15} /></Hi><Slot $w={12}><Rule $h={24} $color="#ddd" /></Slot>
              <Slot $w={24}><Icon n="orient" /></Slot><Slot $w={10}>{A}</Slot><Slot $w={22}><Rule $h={24} $color="#ddd" /></Slot><Slot $w={18} $left><Icon n="wrap" s={15} /></Slot><T w={53}>Wrap Text</T></Row>
            <Row $h={24}><Slot $w={22}><Icon n="xlL" s={15} /></Slot><Slot $w={22}><Icon n="xlC" s={15} /></Slot><Slot $w={22}><Icon n="xlR" s={15} /></Slot><Slot $w={12}><Rule $h={24} $color="#ddd" /></Slot>
              <Slot $w={22}><Icon n="indL" /></Slot><Slot $w={24}><Icon n="indR" /></Slot><Slot $w={10}><Rule $h={24} $color="#ddd" /></Slot><Slot $w={18} $left><Icon n="merge" s={15} /></Slot><T w={86}>Merge &amp; Center</T><Slot $w={22}>{A}</Slot></Row>
          </Col>
          <Foot w={53} launch>Alignment</Foot>
        </Group>
        <Group $w={140}>
          <Col $h={73} $pl={4}>
            <Row $h={37}><Field $w={132}><T w={40}>General</T>{A}</Field></Row>
            <Row $h={24}><Slot $w={24}><Glyph>$</Glyph></Slot><Slot $w={8}>{A}</Slot><Slot $w={30}><Glyph>%</Glyph></Slot><Slot $w={14}><Glyph $f="800 20px">,</Glyph></Slot><Slot $w={14}><Rule $h={22} $color="#ddd" /></Slot>
              <Slot $w={22}><svg width="16" height="15" viewBox="0 0 16 15"><g fontFamily={UI} fontSize="8" fill="#444"><text x="9" y="6">.0</text><text x="3" y="14">.00</text></g><path d="M7 3.500H1M3.500 1L1 3.500 3.500 6" fill="none" stroke="#2e74b8" strokeWidth="1.500" /></svg></Slot>
              <Slot $w={22}><svg width="16" height="15" viewBox="0 0 16 15"><g fontFamily={UI} fontSize="8" fill="#444"><text x="3" y="6">.00</text><text x="9" y="14">.0</text></g><path d="M1 11.500h6M4.500 9L7 11.500 4.500 14" fill="none" stroke="#2e74b8" strokeWidth="1.500" /></svg></Slot></Row>
          </Col>
          <Foot w={43} launch>Number</Foot>
        </Group>
        <Group $w={689}>
          <GroupBody>
            <Slot $w={6} />
            <BigButton w={68} icon="cond" a="Conditional" wa={62} b="Formatting" wb={59} arrow />
            <BigButton w={60} icon="table" a="Format as" wa={52} b="Table" wb={30} arrow />
            <Gallery>
              <Style $sel $c="#000"><T size={13} w={45}>Normal</T></Style><Style $bg="#ffc7ce" $c="#9c0006"><T size={13} w={23}>Bad</T></Style><Style $bg="#c6efce" $c="#006100"><T size={13} w={33}>Good</T></Style>
              <Style $bg="#ffeb9c" $c="#9c6500"><T size={13} w={47}>Neutral</T></Style><Style $bg="#f2f2f2" $c="#fa7d00" $bd="#7f7f7f"><T size={13} bold w={68}>Calculation</T></Style>
              <GalleryScroll><div><Up $s={2.5} $color="#bbb" /></div><div>{A}</div><div>{A}</div></GalleryScroll>
              <Style $bg="#a5a5a5" $c="#fff" $dbl><T size={13} bold w={64}>Check Cell</T></Style><Style $c="#7f7f7f"><T size={13} italic w={88}>Explanatory ...</T></Style><Style $bg="#ffcc99" $c="#3f3f76" $bd="#7f7f7f"><T size={13} w={32}>Input</T></Style>
              <Style $c="#fa7d00" $ul><T size={13} w={68}>Linked Cell</T></Style><Style $bg="#ffffcc" $c="#000" $bd="#b2b2b2"><T size={13} w={30}>Note</T></Style>
            </Gallery>
          </GroupBody>
          <Foot w={29}>Styles</Foot>
        </Group>
        <Group $w={136}>
          <GroupBody><Slot $w={4} /><BigButton w={42} icon="insert" a="Insert" wa={30} arrow /><BigButton w={43} icon="del" a="Delete" wa={33} arrow /><BigButton w={43} icon="fmt" a="Format" wa={38} arrow /></GroupBody>
          <Foot w={24}>Cells</Foot>
        </Group>
        <Group $w={187}>
          <GroupBody>
            <Col $w={93} $pl={7}>
              <Row $h={23}><Slot $w={20} $left><Icon n="xsum" s={15} /></Slot><T w={50}>AutoSum</T><Slot $w={24}>{A}</Slot></Row>
              <Row $h={23}><Slot $w={20} $left><Icon n="fill" s={15} /></Slot><T w={15}>Fill</T><Slot $w={11}>{A}</Slot></Row>
              <Row $h={23}><Slot $w={20} $left><Icon n="eraser" s={14} /></Slot><T w={27}>Clear</T><Slot $w={11}>{A}</Slot></Row>
            </Col>
            <BigButton w={48} icon="sort" a="Sort &amp;" wa={34} b="Filter" wb={27} arrow />
            <BigButton w={40} icon="bino" a="Find &amp;" wa={36} b="Select" wb={32} arrow s={26} />
          </GroupBody>
          <Foot w={37}>Editing</Foot>
        </Group>
        <Controls><Col $h={84} $w={22} $pt={74}><Icon n="caretUp" s={13} /></Col></Controls>
      </Ribbon>
      <FormulaRow>
        <FBox $w={102}><T w={15}>D5</T>{A}</FBox><Slot $w={30} $h={26}><Glyph $f="700 12px">⋮</Glyph></Slot>
        <FBox $w={110} $mr={3}><Slot $w={22}><T color="#b5b5b5"><Icon n="close" s={15} /></T></Slot><svg width="18" height="16" viewBox="0 0 18 16"><path d="M1 9l5 5L17 1" fill="none" stroke="#c0c0c0" strokeWidth="3" /></svg><Glyph $f="22px" $i>fx</Glyph></FBox>
        <FBox $w={1665} $j="flex-end"><Icon n="caretDn" s={10} /></FBox>
      </FormulaRow>
      <Sheet>
        <Cells>
          <HeadRow><Corner><CornerMark /></Corner>{letters.map(l => <ColHead key={l}><T size={15}>{l}</T></ColHead>)}</HeadRow>
          {[...Array(34)].map((_, r) => (
            <GridRow key={r}><RowHead><T size={15} w={r < 9 ? 8 : 16}>{String(r + 1)}</T></RowHead>
              {letters.map(l => { const v = values[l + (r + 1)]; return <Cell key={l} $num={v && v !== '3c1'}>{v}</Cell>; })}
            </GridRow>
          ))}
        </Cells>
        <XScroll><SBtn><Up $s={2.5} /></SBtn><SThumb /><SBtn>{A}</SBtn></XScroll>
      </Sheet>
      <SheetBar>
        <Slot $w={58}><Left $color="#bbb" /></Slot><Slot $w={0}><Right $color="#bbb" /></Slot><Slot $w={42} />
        <SheetTab><T bold w={41}>Sheet1</T></SheetTab><Plus>+</Plus>
        <HTrack><Glyph $f="12px">⋮</Glyph><Slot $w={8} /><SBtn><Left $s={3} /></SBtn><HThumb /><SBtn><Right $s={3} $color="#555" /></SBtn><Slot $w={6} /></HTrack>
      </SheetBar>
      <Green>
        <T size={11} w={33}>READY</T>
        <Controls>
          <View $on><svg width="14" height="12" viewBox="0 0 14 12"><path d="M.5.5h13v11H.5zM.5 4h13M.5 8h13M5 .5v11M9 .5v11" fill="none" stroke="#fff" /></svg></View>
          <View><svg width="14" height="12" viewBox="0 0 14 12"><path d="M.5.5h13v11H.5zM3.500 3.500h7v8M3.500 3.500v8M5 6h4M5 9h4" fill="none" stroke="#fff" /></svg></View>
          <View><svg width="14" height="12" viewBox="0 0 14 12"><path d="M.5.5h13v11H.5zM5 .5v6h4v-6" fill="none" stroke="#fff" /><path d="M1 7h12v4H1z" fill="#fff" /></svg></View>
          <Slot $w={15}><T color="#fff">−</T></Slot><Zoom><i /></Zoom><Slot $w={14}><T color="#fff">+</T></Slot><Slot $w={12} /><T size={11} color="#fff" w={30}>115%</T><Slot $w={6} />
        </Controls>
      </Green>
    </Excel>
  );
}

export default function App() {
  return (
    <Page>
      <Global />
      <Monitor>
        <Vivado />
        <LeftTaskbar />
        <Bezel />
        <StartMenu />
      </Monitor>
      <Monitor>
        <Bezel />
        <ExcelWindow />
        <Bar $right>
          <Tasks $ml={3}>
            {rightTasks.map((n, i) => <Task key={i} $on><BigIcon n={n} s={n === 'folder' ? 29 : 31} /></Task>)}
          </Tasks>
        </Bar>
      </Monitor>
    </Page>
  );
}
